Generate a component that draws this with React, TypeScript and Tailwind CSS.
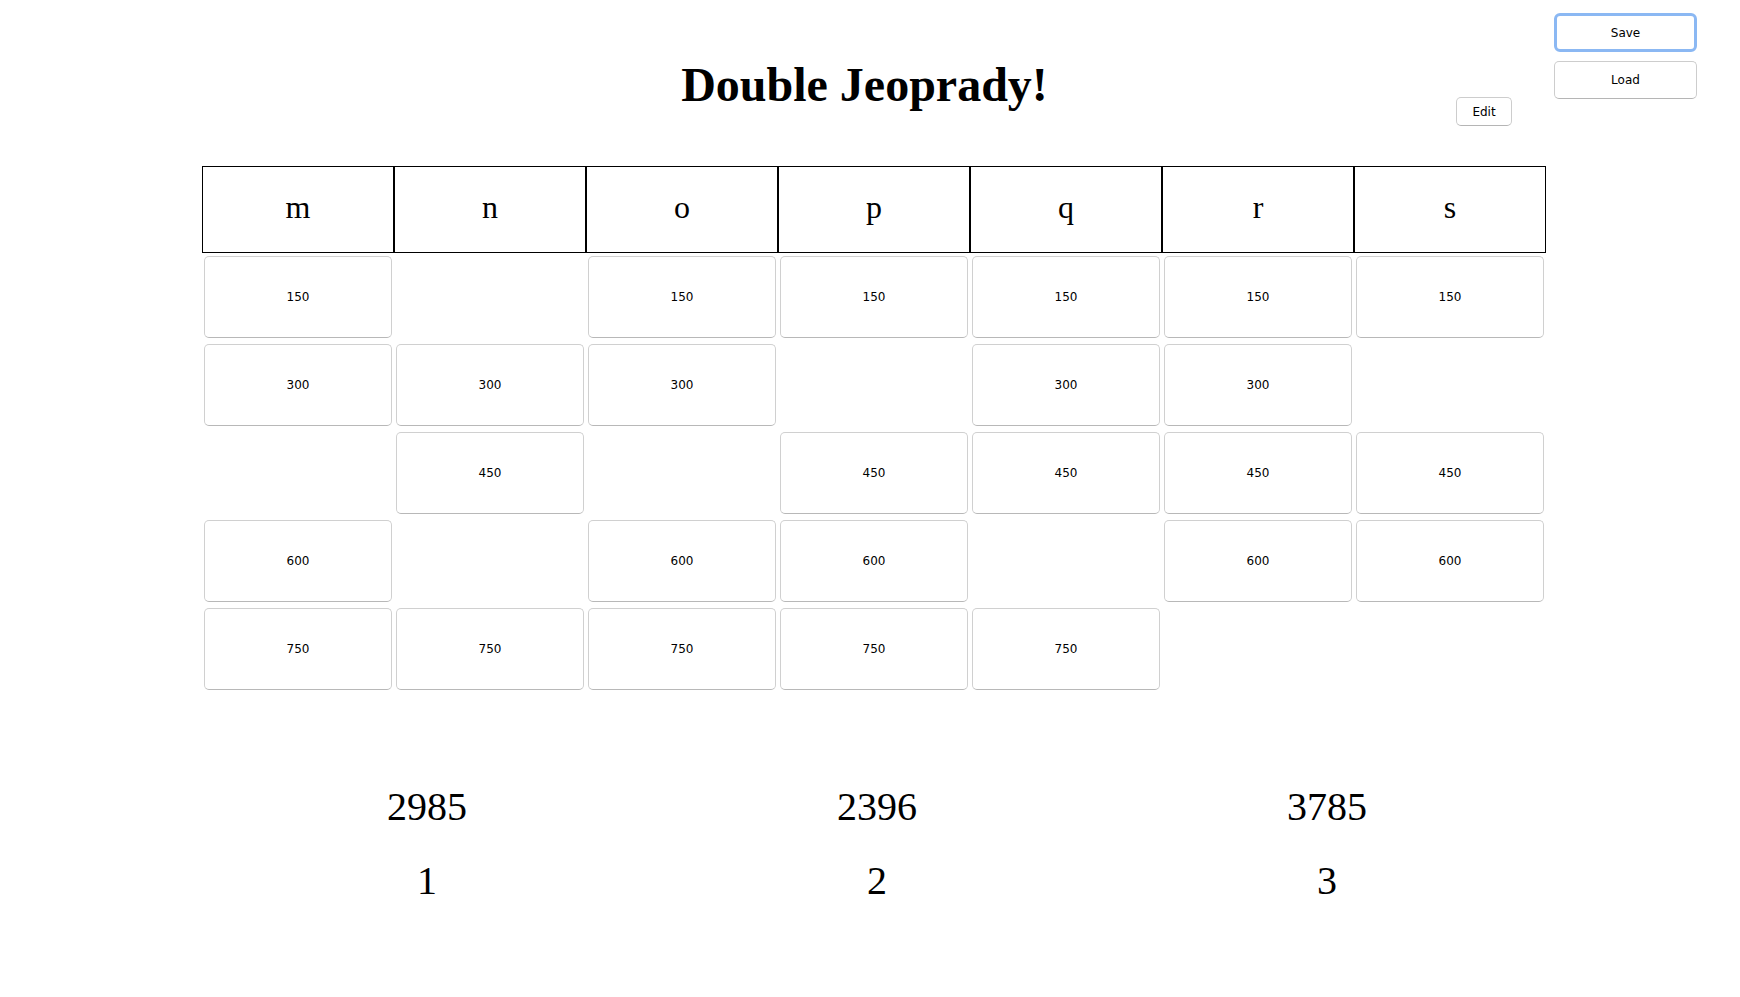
import React from "react";

const cats = ["m", "n", "o", "p", "q", "r", "s"];
const values = [150, 300, 450, 600, 750];
// availability per row (value) per column
const grid: boolean[][] = [
  [true, false, true, true, true, true, true],
  [true, true, true, false, true, true, false],
  [false, true, false, true, true, true, true],
  [true, false, true, true, false, true, true],
  [true, true, true, true, true, false, false],
];

const scores = [
  { score: 2985, name: "1" },
  { score: 2396, name: "2" },
  { score: 3785, name: "3" },
];

const sans = "font-['DejaVu_Sans',Verdana,sans-serif]";

export default function App() {
  return (
    <div className="relative min-h-screen bg-white text-black font-['Liberation_Serif','Times_New_Roman',serif] pt-[57px]">
      <div className="absolute top-[13px] right-[43px] flex flex-col gap-[9px]">
        <button
          className={`${sans} w-[143px] h-[39px] rounded-[6px] border-[3px] border-[#8bb8f3] bg-white text-[12px] text-black`}
        >
          Save
        </button>
        <button
          className={`${sans} w-[143px] h-[38px] rounded-[5px] border border-[#cdcdcd] border-b-[#b5b5b5] bg-white text-[12px] text-black`}
        >
          Load
        </button>
      </div>

      <div className="grid grid-cols-[1fr_auto_1fr] h-[109px] pr-[11px] items-start">
        <div />
        <h1 className="text-[48px] leading-[55px] font-bold">Double Jeoprady!</h1>
        <div className="flex justify-end pr-[217px] pt-[40px]">
          <button
            className={`${sans} w-[56px] h-[29px] rounded-[5px] border border-[#cdcdcd] border-b-[#b5b5b5] bg-white text-[12px] text-black`}
          >
            Edit
          </button>
        </div>
      </div>

      <div className="ml-[202px] w-[1344px]">
        <div className="grid grid-cols-7">
          {cats.map((c) => (
            <div
              key={c}
              className="h-[87px] border border-black flex items-center justify-center text-[32px] leading-none pb-[6px]"
            >
              {c}
            </div>
          ))}
        </div>
        {values.map((v, r) => (
          <div key={v} className="grid grid-cols-7">
            {cats.map((c, ci) => (
              <div key={c} className="h-[88px] px-[2px] py-[3px]">
                {grid[r][ci] && (
                  <button
                    className={`${sans} w-full h-full rounded-[5px] border border-[#d0d0d0] border-b-[#b8b8b8] bg-white text-[12px] text-black`}
                  >
                    {v}
                  </button>
                )}
              </div>
            ))}
          </div>
        ))}
      </div>

      <div className="ml-[202px] w-[1350px] grid grid-cols-3 mt-[90px]">
        {scores.map((s) => (
          <div key={s.name} className="flex flex-col items-center gap-[26px] text-[40px] leading-[48px]">
            <div>{s.score}</div>
            <div>{s.name}</div>
          </div>
        ))}
      </div>
    </div>
  );
}
